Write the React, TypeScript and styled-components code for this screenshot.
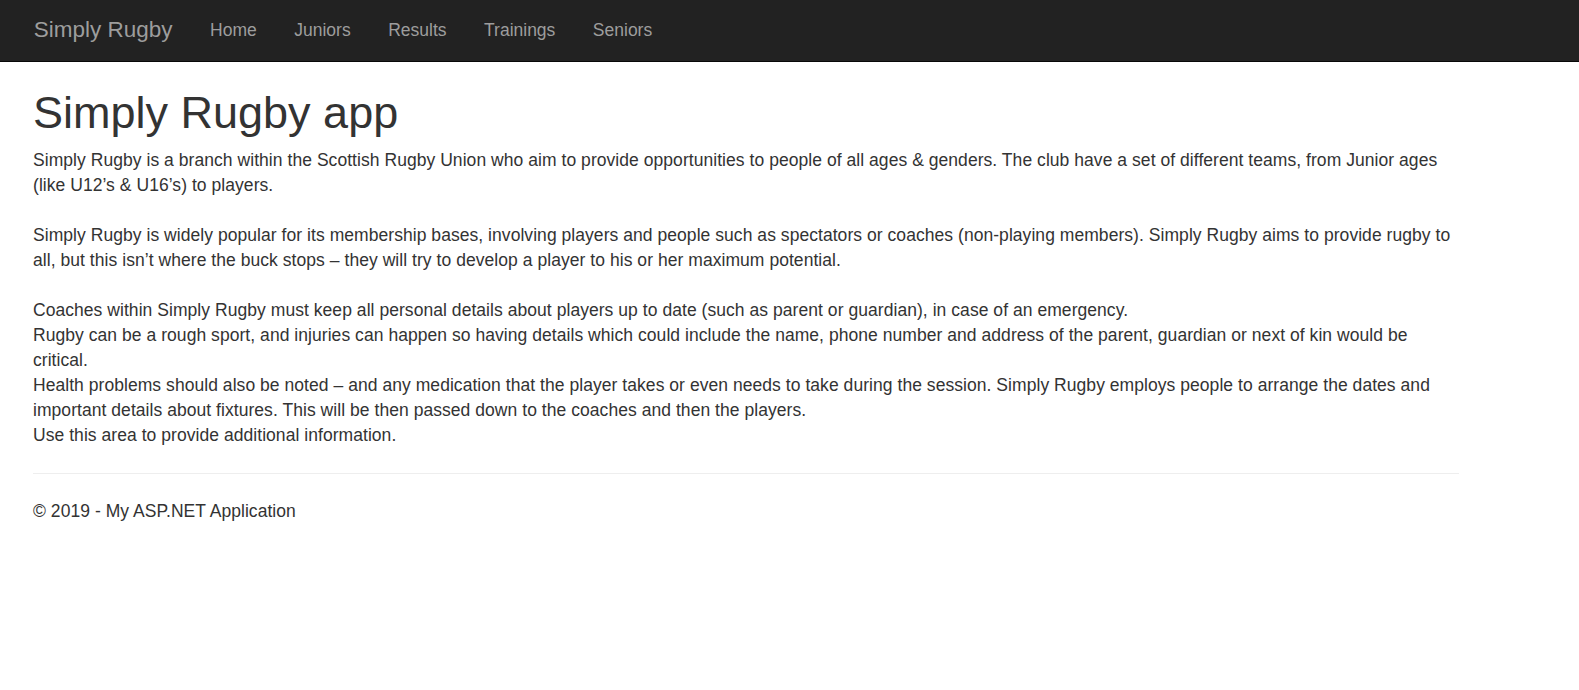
import styled, { createGlobalStyle } from "styled-components";

const GlobalStyle = createGlobalStyle`
  html, body {
    margin: 0;
    padding: 0;
    background: #fff;
  }
  body {
    font-family: "Liberation Sans", Arial, Helvetica, sans-serif;
    font-size: 17.5px;
    line-height: 25px;
    color: #333;
  }
`;

const links = ["Home", "Juniors", "Results", "Trainings", "Seniors"];

const App = () => {
  return (
    <>
      <GlobalStyle />
      <Navbar>
        <NavInner>
          <Brand href="#">Simply Rugby</Brand>
          <NavList>
            {links.map((label) => (
              <NavItem key={label}>
                <NavLink href="#">{label}</NavLink>
              </NavItem>
            ))}
          </NavList>
        </NavInner>
      </Navbar>
      <Main>
        <Title>Simply Rugby app</Title>
        <Text>
          Simply Rugby is a branch within the Scottish Rugby Union who aim to
          provide opportunities to people of all ages &amp; genders. The club
          have a set of different teams, from Junior ages (like U12’s &amp;
          U16’s) to players.
          <br />
          <br />
          Simply Rugby is widely popular for its membership bases, involving
          players and people such as spectators or coaches (non-playing
          members). Simply Rugby aims to provide rugby to all, but this isn’t
          where the buck stops – they will try to develop a player to his or
          her maximum potential.
          <br />
          <br />
          Coaches within Simply Rugby must keep all personal details about
          players up to date (such as parent or guardian), in case of an
          emergency.
          <br />
          Rugby can be a rough sport, and injuries can happen so having details
          which could include the name, phone number and address of the
          parent, guardian or next of kin would be critical.
          <br />
          Health problems should also be noted – and any medication that the
          player takes or even needs to take during the session. Simply Rugby
          employs people to arrange the dates and important details about
          fixtures. This will be then passed down to the coaches and then the
          players.
          <br />
          Use this area to provide additional information.
        </Text>
        <Rule />
        <Footer>
          <Text>© 2019 - My ASP.NET Application</Text>
        </Footer>
      </Main>
    </>
  );
};

const Navbar = styled.nav`
  background-color: #222;
  border-bottom: 1px solid #080808;
  height: 61px;
`;

const NavInner = styled.div`
  display: flex;
  align-items: center;
  height: 100%;
  padding-left: 15px;
`;

const Brand = styled.a`
  padding: 0 18.75px 2px;
  font-size: 22.5px;
  line-height: 25px;
  color: #9d9d9d;
  text-decoration: none;
`;

const NavList = styled.ul`
  display: flex;
  list-style: none;
  margin: 0;
  padding: 0;
`;

const NavItem = styled.li`
  display: block;
`;

const NavLink = styled.a`
  display: block;
  padding: 0 18.75px;
  color: #9d9d9d;
  text-decoration: none;
  font-size: 17.5px;
  line-height: 25px;
`;

const Main = styled.main`
  width: 1426px;
  margin-left: 33px;
  padding-top: 1px;
`;

const Title = styled.h1`
  margin: 25px 0 10px;
  font-size: 45px;
  font-weight: 500;
  line-height: 1.1;
`;

const Text = styled.p`
  margin: 0 0 12.5px;
  letter-spacing: 0.05px;
`;

const Rule = styled.hr`
  margin: 25px 0;
  border: 0;
  border-top: 1px solid #eee;
`;

const Footer = styled.footer`
  display: block;
`;

export default App;
